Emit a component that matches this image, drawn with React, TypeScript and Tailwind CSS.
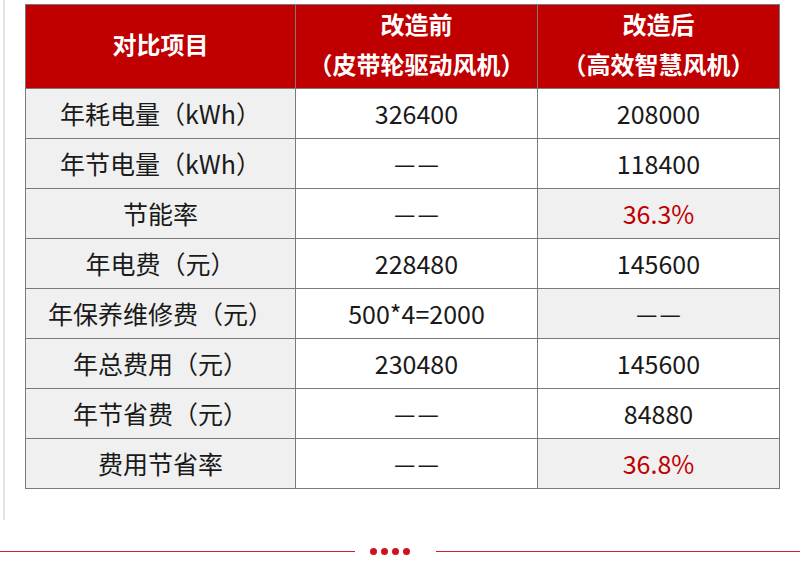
import React from "react"

interface Row {
  label: string
  before: string
  after: string
  highlight?: boolean
  red?: boolean
}

const rows: Row[] = [
  { label: "年耗电量（kWh）", before: "326400", after: "208000" },
  { label: "年节电量（kWh）", before: "——", after: "118400" },
  { label: "节能率", before: "——", after: "36.3%", highlight: true, red: true },
  { label: "年电费（元）", before: "228480", after: "145600" },
  { label: "年保养维修费（元）", before: "500*4=2000", after: "——", highlight: true },
  { label: "年总费用（元）", before: "230480", after: "145600" },
  { label: "年节省费（元）", before: "——", after: "84880" },
  { label: "费用节省率", before: "——", after: "36.8%", highlight: true, red: true },
]

// the two dashes sit a little apart in the source table
const Value = ({ text }: { text: string }) =>
  text === "——" ? (
    <span className="inline-flex gap-[2px] text-[24px]">
      <span>—</span>
      <span>—</span>
    </span>
  ) : (
    <span>{text}</span>
  )

export default function App() {
  return (
    <div
      className="w-[800px] h-[565px] bg-white overflow-hidden text-[#1a1a1a]"
      style={{ fontFamily: '"Noto Sans CJK SC", "Noto Sans", sans-serif' }}
    >
      {/* Content frame */}
      <div className="ml-[3px] h-[520px] border-l-2 border-[#e4e4e4] pl-[20px] pt-[4px]">
        <table className="border-collapse table-fixed w-[754px]">
          <colgroup>
            <col className="w-[270px]" />
            <col className="w-[242px]" />
            <col className="w-[242px]" />
          </colgroup>
          <thead>
            <tr className="h-[84px] bg-[#c00000] text-white text-[24px] leading-[40px]">
              <th className="border border-[#7a7a7a] font-bold p-0">
                <div className="-mt-[6px]">对比项目</div>
              </th>
              <th className="border border-[#7a7a7a] font-bold p-0">
                <div className="-mt-[6px]">
                  <div>改造前</div>
                  <div>（皮带轮驱动风机）</div>
                </div>
              </th>
              <th className="border border-[#7a7a7a] font-bold p-0">
                <div className="-mt-[6px]">
                  <div>改造后</div>
                  <div>（高效智慧风机）</div>
                </div>
              </th>
            </tr>
          </thead>
          <tbody className="text-[25px] leading-[30px]">
            {rows.map((row) => (
              <tr key={row.label} className="h-[50px]">
                <td className="border border-[#7a7a7a] bg-[#f0f0f0] text-center pb-[2px]">{row.label}</td>
                <td className="border border-[#7a7a7a] bg-white text-center pb-[2px]">
                  <Value text={row.before} />
                </td>
                <td
                  className={`border border-[#7a7a7a] text-center pb-[2px] ${row.highlight ? "bg-[#f0f0f0]" : "bg-white"} ${
                    row.red ? "text-[#c00000]" : ""
                  }`}
                >
                  <Value text={row.after} />
                </td>
              </tr>
            ))}
          </tbody>
        </table>
      </div>

      {/* Divider */}
      <div className="mt-[28px] flex items-center h-[7px]">
        <div className="w-[355px] h-px bg-[#d0202e]" />
        <div className="ml-[15px] flex gap-[4px]">
          <span className="w-[7px] h-[7px] rounded-full bg-[#d0101e]" />
          <span className="w-[7px] h-[7px] rounded-full bg-[#d0101e]" />
          <span className="w-[7px] h-[7px] rounded-full bg-[#d0101e]" />
          <span className="w-[7px] h-[7px] rounded-full bg-[#d0101e]" />
        </div>
        <div className="ml-[26px] flex-1 h-px bg-[#d0202e]" />
      </div>
    </div>
  )
}
